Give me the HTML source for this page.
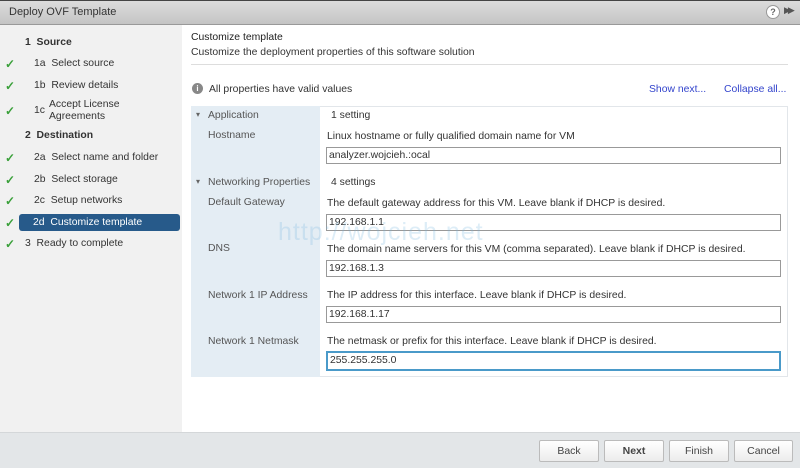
<!DOCTYPE html><html><head><style>
body{margin:0;width:800px;height:468px;overflow:hidden;font-family:"Liberation Sans",sans-serif;font-size:10.4px;color:#333;position:relative;background:#fff}
.a{position:absolute}
#title{left:0;top:0;width:800px;height:25px;background:linear-gradient(#dcdcdc,#c4c4c4);border-bottom:1px solid #999;border-top:1px solid #444;box-sizing:border-box}
#left{left:0;top:25px;width:182px;height:407px;background:#f1f1f1}
#foot{left:0;top:432px;width:800px;height:36px;background:#e3e6e8;border-top:1px solid #d4d7d9;box-sizing:border-box}
.ck{color:#3aa03a;font-weight:bold;font-size:12px}
.btn{top:440px;height:20px;width:58px;border:1px solid #bbb;border-radius:2px;background:linear-gradient(#fff,#ececec);text-align:center;line-height:20px;font-size:10.5px;color:#444}
.inp{left:326px;width:455px;height:17px;border:1px solid #999;box-sizing:border-box;padding-left:2px;line-height:15px;font-size:10.4px;background:#fff}
.lb{left:208px;color:#555}
.ds{left:327px}
</style></head><body>
<div id="title" class="a"><span class="a" style="left:9px;top:5px;font-size:11px;color:#333">Deploy OVF Template</span>
<span class="a" style="left:766px;top:4px;width:12px;height:12px;border-radius:50%;background:#fff;border:1px solid #999;font-size:9px;text-align:center;line-height:12px;font-weight:bold;color:#666">?</span>
<span class="a" style="left:784px;top:4px;font-size:9px;color:#555;letter-spacing:-3px">▶▶</span></div>
<div id="left" class="a"></div>
<div class="a" style="left:25px;top:37px;font-weight:bold">1&nbsp; Source</div>
<div class="a ck" style="left:5px;top:57px">✓</div><div class="a" style="left:34px;top:58px">1a&nbsp; Select source</div>
<div class="a ck" style="left:5px;top:79px">✓</div><div class="a" style="left:34px;top:80px">1b&nbsp; Review details</div>
<div class="a ck" style="left:5px;top:104px">✓</div><div class="a" style="left:34px;top:105px">1c</div><div class="a" style="left:49px;top:99px;line-height:12px">Accept License<br>Agreements</div>
<div class="a" style="left:25px;top:130px;font-weight:bold">2&nbsp; Destination</div>
<div class="a ck" style="left:5px;top:151px">✓</div><div class="a" style="left:34px;top:152px">2a&nbsp; Select name and folder</div>
<div class="a ck" style="left:5px;top:173px">✓</div><div class="a" style="left:34px;top:174px">2b&nbsp; Select storage</div>
<div class="a ck" style="left:5px;top:194px">✓</div><div class="a" style="left:34px;top:195px">2c&nbsp; Setup networks</div>
<div class="a ck" style="left:5px;top:216px">✓</div>
<div class="a" style="left:19px;top:214px;width:161px;height:17px;background:#275a8a;border-radius:3px;color:#fff;line-height:17px"><span style="padding-left:14px">2d&nbsp; Customize template</span></div>
<div class="a ck" style="left:5px;top:237px">✓</div><div class="a" style="left:25px;top:238px">3&nbsp; Ready to complete</div>

<div class="a" style="left:191px;top:32px;color:#222">Customize template</div>
<div class="a" style="left:191px;top:47px">Customize the deployment properties of this software solution</div>
<div class="a" style="left:191px;top:64px;width:597px;height:1px;background:#ddd"></div>
<div class="a" style="left:192px;top:83px;width:11px;height:11px;border-radius:50%;background:#888;color:#fff;font-size:8px;text-align:center;line-height:11px;font-weight:bold">i</div>
<div class="a" style="left:209px;top:84px">All properties have valid values</div>
<div class="a" style="left:649px;top:84px;color:#3344cc">Show next...</div>
<div class="a" style="left:724px;top:84px;color:#3344cc">Collapse all...</div>

<div class="a" style="left:191px;top:106px;width:597px;height:271px;background:#fff;border:1px solid #e2e6ea;box-sizing:border-box"></div>
<div class="a" style="left:191px;top:106px;width:129px;height:271px;background:#e4edf4"></div>
<div class="a" style="left:196px;top:110px;font-size:8px;color:#666">▾</div><div class="a lb" style="top:110px">Application</div><div class="a" style="left:331px;top:110px">1 setting</div>
<div class="a lb" style="top:130px">Hostname</div><div class="a ds" style="top:131px">Linux hostname or fully qualified domain name for VM</div>
<div class="a inp" style="top:147px">analyzer.wojcieh.:ocal</div>
<div class="a" style="left:196px;top:177px;font-size:8px;color:#666">▾</div><div class="a lb" style="top:177px">Networking Properties</div><div class="a" style="left:331px;top:177px">4 settings</div>
<div class="a lb" style="top:197px">Default Gateway</div><div class="a ds" style="top:198px">The default gateway address for this VM. Leave blank if DHCP is desired.</div>
<div class="a inp" style="top:214px">192.168.1.1</div>
<div class="a lb" style="top:243px">DNS</div><div class="a ds" style="top:244px">The domain name servers for this VM (comma separated). Leave blank if DHCP is desired.</div>
<div class="a inp" style="top:260px">192.168.1.3</div>
<div class="a lb" style="top:290px">Network 1 IP Address</div><div class="a ds" style="top:290px">The IP address for this interface. Leave blank if DHCP is desired.</div>
<div class="a inp" style="top:306px">192.168.1.17</div>
<div class="a lb" style="top:336px">Network 1 Netmask</div><div class="a ds" style="top:336px">The netmask or prefix for this interface. Leave blank if DHCP is desired.</div>
<div class="a inp" style="top:351px;height:20px;border:2px solid #4a9ac9;line-height:15px">255.255.255.0</div>
<div class="a" style="left:278px;top:218px;font-size:25px;color:rgba(120,185,225,0.25);letter-spacing:1px">http://wojcieh.net</div>

<div id="foot" class="a"></div>
<div class="a btn" style="left:539px;width:58px">Back</div>
<div class="a btn" style="left:604px;width:58px;font-weight:bold">Next</div>
<div class="a btn" style="left:669px;width:58px">Finish</div>
<div class="a btn" style="left:734px;width:57px">Cancel</div>
</body></html>
